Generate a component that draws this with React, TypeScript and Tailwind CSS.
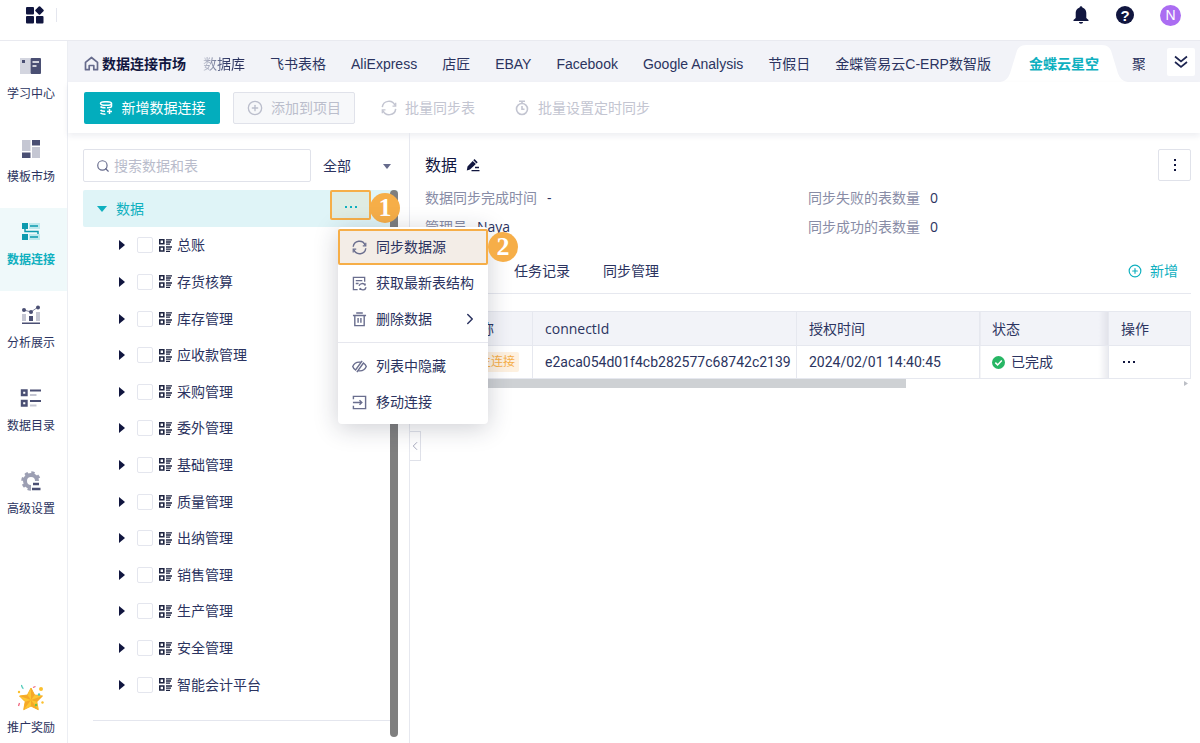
import type { ReactNode } from "react";
import { ChevronLeft, ChevronRight, CirclePlus, Search } from "lucide-react";

const railItems = [
  { label: "学习中心", icon: <LearnIcon /> },
  { label: "模板市场", icon: <TemplateIcon /> },
  { label: "数据连接", icon: <ConnectIcon />, active: true },
  { label: "分析展示", icon: <AnalysisIcon /> },
  { label: "数据目录", icon: <CatalogIcon /> },
  { label: "高级设置", icon: <SettingsIcon /> },
];

const tabs = ["飞书表格", "AliExpress", "店匠", "EBAY", "Facebook", "Google Analysis", "节假日", "金蝶管易云C-ERP数智版"];

const modules = [
  "总账",
  "存货核算",
  "库存管理",
  "应收款管理",
  "采购管理",
  "委外管理",
  "基础管理",
  "质量管理",
  "出纳管理",
  "销售管理",
  "生产管理",
  "安全管理",
  "智能会计平台",
];

function LearnIcon() {
  return (
    <svg width="22" height="20" viewBox="0 0 22 20">
      <path d="M0 2h10v16H0z" fill="#d3d5df" />
      <path d="M2 4h3v3H2z" fill="#4a4f73" />
      <rect x="10.500" y="2" width="10.500" height="16" rx="1" fill="#4a4f73" />
      <path d="M12.500 6h6.500M12.500 10h4" stroke="#fff" strokeWidth="1.300" />
    </svg>
  );
}

function TemplateIcon() {
  return (
    <svg width="20" height="20" viewBox="0 0 20 20">
      <path d="M1 1h8.500v11H1zM11 8h8v11h-8z" fill="#c5c7d3" />
      <path d="M11 1h8v5.500h-8zM1 13.500h8.500V19H1z" fill="#4a4f73" />
    </svg>
  );
}

function ConnectIcon() {
  return (
    <svg width="20" height="20" viewBox="0 0 20 20">
      <path d="M8 1h11v6H8zM8 12h11v6H8z" fill="#bfe9ed" />
      <path d="M1 1h6v6H1zM1 12h6v6H1z" fill="#0d9aae" />
      <path d="M9 4h8M9 15h8M4 7v2.500h13V12" fill="none" stroke="#0d9aae" strokeWidth="1.500" />
    </svg>
  );
}

function AnalysisIcon() {
  return (
    <svg width="20" height="20" viewBox="0 0 20 20">
      <path d="M1 9h4v7H1zM15 7h4v9h-4z" fill="#c5c7d3" />
      <path d="M8 11h4v5H8zM1 17.500h18V19H1z" fill="#4a4f73" />
      <path d="M3 5l7 2 7-5" fill="none" stroke="#8487a0" />
      <circle cx="3" cy="5" r="2" fill="#4a4f73" />
      <circle cx="10" cy="7" r="2" fill="#4a4f73" />
      <circle cx="17" cy="2.500" r="2" fill="#4a4f73" />
    </svg>
  );
}

function CatalogIcon() {
  return (
    <svg width="22" height="20" viewBox="0 0 22 20">
      <path d="M2 2.500h4.500V7H2zM2 13h4.500v4.500H2z" fill="none" stroke="#4a4f73" strokeWidth="2.400" />
      <path d="M10 2.500h11M10 13h11" stroke="#4a4f73" strokeWidth="2.200" />
      <path d="M10 7h6.500M10 17.500h6.500" stroke="#c5c7d3" strokeWidth="2.200" />
    </svg>
  );
}

function SettingsIcon() {
  return (
    <svg width="20" height="20" viewBox="0 0 20 20">
      <circle cx="10" cy="10" r="6" fill="none" stroke="#9c9fb3" strokeWidth="4" />
      <circle cx="10" cy="10" r="8.500" fill="none" stroke="#9c9fb3" strokeWidth="2.500" strokeDasharray="3.340" />
      <path d="M10 10h10v10H10z" fill="#fff" />
      <path d="M12 13h6M11 18h8.500" stroke="#4a4f73" strokeWidth="2.600" />
    </svg>
  );
}

function StarIcon() {
  return (
    <svg width="28" height="28" viewBox="0 0 28 28">
      <path d="M14 4l3.600 7 7.900 1-5.700 5.700 1.500 8-7.300-3.600-7.300 3.600 1.500-8L2.500 12l7.900-1z" fill="#fdc631" stroke="#f9b52a" strokeLinejoin="round" />
      <path d="M14 4v12l3.600-5zM25.500 12L14 16l5.800 1.700zM21.300 25.700L14 16v6.100zM6.700 25.700L14 16l-5.800 1.700zM2.500 12L14 16l-3.600-5z" fill="#f5a828" />
      <path d="M4 1.500c2 0 0 2.500 2.500 3" fill="none" stroke="#4cc9b8" strokeWidth="1.300" />
      <path d="M16 3.500l2.500-1M1.500 22l1-3" stroke="#f0647c" strokeWidth="1.300" />
      <circle cx="24" cy="5" r="2" fill="#fbc02d" />
      <circle cx="2" cy="8" r="1.200" fill="#fbc02d" />
      <circle cx="25.500" cy="18.500" r="1.200" fill="#fbc02d" />
      <circle cx="22" cy="10.500" r="1.200" fill="#4cc9b8" />
      <circle cx="19" cy="21" r="1.200" fill="#6cc04a" />
    </svg>
  );
}

function LogoIcon() {
  return (
    <svg width="18" height="18" viewBox="0 0 18 18" fill="#11163f">
      <rect y="1" width="8" height="7.500" rx="1" />
      <rect y="10" width="8" height="7.500" rx="1" />
      <rect x="10" y="10" width="7.500" height="7.500" rx="1" />
      <rect x="10.200" y="1.200" width="6.600" height="6.600" rx="1" transform="rotate(45 13.500 4.500)" />
    </svg>
  );
}

function HomeIcon() {
  return (
    <svg width="15" height="15" viewBox="0 0 15 15" fill="none" stroke="#666b8c" strokeWidth="1.700">
      <path d="M1.500 6.300L7.500 1.500l6 4.800v7.400H9.800V9.500H5.200v4.200H1.500z" strokeLinejoin="round" />
    </svg>
  );
}

function DoubleDownIcon() {
  return (
    <svg width="14" height="14" viewBox="0 0 14 14" fill="none" stroke="#1d2450" strokeWidth="1.700">
      <path d="M1 1.500l6 4.800 6-4.800M1 7l6 4.800L13 7" />
    </svg>
  );
}

function SyncIcon() {
  return (
    <svg width="16" height="16" viewBox="0 0 16 16" fill="none" stroke="currentColor" strokeWidth="1.500">
      <path d="M1.300 7.200A6.600 6.600 0 0 1 14 5.500M14.700 8.800A6.600 6.600 0 0 1 2 10.500" />
      <path d="M14.700 2.800v3.400h-3.200M1.300 13.200V9.800h3.200" strokeWidth="1.300" />
    </svg>
  );
}

function TimerIcon() {
  return (
    <svg width="14" height="16" viewBox="0 0 14 16" fill="none" stroke="currentColor" strokeWidth="1.600">
      <circle cx="7" cy="9" r="5.500" />
      <path d="M4 1.200h6M7 1v2.500M7 6v3.300h2.500" />
    </svg>
  );
}

function DatabaseAddIcon() {
  return (
    <svg width="14" height="14" viewBox="0 0 14 14" fill="none" stroke="currentColor" strokeWidth="1.500">
      <ellipse cx="7" cy="2.500" rx="5.500" ry="1.800" />
      <path d="M12.500 2.500v2.700c0 .8-2 1.500-4.500 1.500M1.500 5.500c.8 1 3 1.300 5 1.300M1.500 9c.8 1 2.500 1.300 4.500 1.300M1.500 12c.8.800 2.500 1.200 5 1.200M10.500 8v5M8 10.500h5" />
    </svg>
  );
}

function TableListIcon() {
  return (
    <svg width="13" height="13" viewBox="0 0 13 13" fill="none" stroke="#1d2340">
      <path d="M.8.8h4v4h-4zM.8 8h4v4h-4z" strokeWidth="1.600" />
      <path d="M7 .8h6M7 3h5M7 5.200h4M7 8h6M7 10.100h5M7 12.300h4" strokeWidth="1.300" />
    </svg>
  );
}

function StructureIcon() {
  return (
    <svg width="16" height="16" viewBox="0 0 16 16" fill="none" stroke="currentColor" strokeWidth="1.400">
      <path d="M6 14.500H1.500v-13h12V6M4 5h7M4 8h3" />
      <path d="M7.500 10.500a3.500 3.500 0 0 1 6.500-.5V8M15 12a3.500 3.500 0 0 1-6.500 1v2" />
    </svg>
  );
}

function TrashIcon() {
  return (
    <svg width="16" height="16" viewBox="0 0 16 16" fill="none" stroke="currentColor" strokeWidth="1.500">
      <path d="M4.500 1h7M1 3.700h14M3 3.700v10.800h10V3.700M6.500 6.500v5M9.500 6.500v5" />
    </svg>
  );
}

function HiddenIcon() {
  return (
    <svg width="16" height="16" viewBox="0 0 16 16" fill="none" stroke="currentColor" strokeWidth="1.500">
      <path d="M9.500 3.500C5 2.800 2 5 .8 8c.5 1.500 1.500 2.700 3 3.700L10.800 2M6.500 12.500c4.500.7 7.500-1.500 8.700-4.500-.5-1.500-1.500-2.700-3-3.700L5.200 14" />
    </svg>
  );
}

function MoveIcon() {
  return (
    <svg width="16" height="16" viewBox="0 0 16 16" fill="none" stroke="currentColor" strokeWidth="1.500">
      <path d="M1.500 4.500v-3h13v13h-13v-3M1 8h9.500M8 5.500L10.500 8 8 10.500" />
    </svg>
  );
}

function EditIcon() {
  return (
    <svg width="14" height="14" viewBox="0 0 14 14" fill="#11163f">
      <path d="M8.500 1l3.200 3.200-1.200 1.200-3.200-3.200zM6.700 2.900l3.200 3.200L4 11.500.8 12.500l.7-4z" />
      <path d="M9 9.500h4M5.500 12.600h8" stroke="#11163f" strokeWidth="1.300" />
    </svg>
  );
}

function Marker({ children }: { children: ReactNode }) {
  return (
    <span className="flex h-[30px] w-[30px] items-center justify-center rounded-full bg-[#f6ae48] font-['Liberation_Serif',serif] text-[26px] leading-none font-bold text-white">
      {children}
    </span>
  );
}

function TopBar() {
  return (
    <header className="flex h-[41px] shrink-0 items-start justify-between border-b border-[#e9eaf0] pr-[19px] pl-[26px]">
      <div className="flex h-[30px] items-center gap-3">
        <button aria-label="应用">
          <LogoIcon />
        </button>
        <span className="h-[14px] w-px bg-[#e4e6ee]" />
      </div>
      <div className="flex h-[30px] items-center gap-[26px]">
        <button aria-label="通知">
          <svg width="18" height="18" viewBox="0 0 18 18" fill="#11163f">
            <circle cx="9" cy="1.500" r="1.300" />
            <path d="M9 1.500c-3.500 0-5.300 2.500-5.300 5.500v5L1.500 14v1h15v-1l-2.200-2V7c0-3-1.800-5.500-5.300-5.500zM7 16h4c0 1-.8 1.700-2 1.700S7 17 7 16z" />
          </svg>
        </button>
        <button aria-label="帮助" className="flex h-[18px] w-[18px] items-center justify-center rounded-full bg-[#11163f] font-['Liberation_Sans',sans-serif] text-[15px] leading-none font-bold text-white">
          ?
        </button>
        <button className="flex h-[21px] w-[21px] items-center justify-center rounded-full bg-[#ab6df2] font-['Liberation_Sans',sans-serif] text-sm leading-none text-white">
          N
        </button>
      </div>
    </header>
  );
}

function Rail() {
  return (
    <nav className="flex w-[68px] shrink-0 flex-col border-r border-[#eceef3] pt-px text-xs">
      {railItems.map((item) => (
        <a
          key={item.label}
          href="#"
          className={
            item.active
              ? "flex h-[83px] flex-col items-center bg-[#eff9fa] pt-[14px] pr-[5px] font-bold text-[#0fb0bf]"
              : "flex h-[83px] flex-col items-center pt-[14px] pr-[5px]"
          }
        >
          {item.icon}
          <span className="mt-[9px] leading-[18px]">{item.label}</span>
        </a>
      ))}
      <a href="#" className="mt-auto flex flex-col items-center pr-[5px] pb-[6px]">
        <StarIcon />
        <span className="mt-[7px] leading-[18px]">推广奖励</span>
      </a>
    </nav>
  );
}

function SourceTabs() {
  return (
    <div className="flex h-[41px] items-center bg-[#f2f3f8] pr-[5px] pl-4 font-['Liberation_Sans','Noto_Sans_CJK_SC',sans-serif] whitespace-nowrap">
      <a href="#" className="mt-1 flex items-center gap-[3px] font-bold text-[#11163f]">
        <HomeIcon />
        数据连接市场
      </a>
      <div className="mt-1 flex min-w-0 flex-1 items-center gap-[25px] overflow-hidden pl-[17px]">
        <a href="#" className="bg-linear-to-r from-[#c9cbd6] to-[#2b3360] to-60% bg-clip-text text-transparent">
          数据库
        </a>
        {tabs.map((tab) => (
          <a key={tab} href="#">
            {tab}
          </a>
        ))}
      </div>
      <a href="#" className="relative flex h-[37px] w-[128px] shrink-0 items-center justify-center self-end font-bold text-[#0fb0bf]">
        <svg className="absolute inset-0 h-full w-full" viewBox="0 0 126 37" preserveAspectRatio="none">
          <path d="M0 37c6-1 8-4 10-9l6-20c1-5 4-8 10-8h74c6 0 9 3 10 8l6 20c2 5 4 8 10 9z" fill="#fff" />
        </svg>
        <span className="relative">金蝶云星空</span>
      </a>
      <a href="#" className="mt-1 ml-1 w-[13px] shrink-0 overflow-hidden">
        聚
      </a>
      <button aria-label="更多" className="ml-[22px] flex h-7 w-7 shrink-0 items-center justify-center rounded-xs bg-white">
        <DoubleDownIcon />
      </button>
    </div>
  );
}

function Toolbar() {
  return (
    <div className="relative z-10 flex h-[51px] items-center bg-white pl-4 shadow-[0_3px_6px_rgba(30,40,90,0.08)]">
      <button className="flex h-8 w-[136px] items-center justify-center gap-[9px] rounded-xs bg-[#03adbd] text-white">
        <DatabaseAddIcon />
        新增数据连接
      </button>
      <button disabled className="ml-[13px] flex h-8 w-[122px] items-center justify-center gap-2 rounded-xs border border-[#e0e2ea] bg-[#f7f8fa] text-[#bbbecc]">
        <CirclePlus className="h-4 w-4" strokeWidth={2} />
        添加到项目
      </button>
      <button disabled className="ml-[26px] flex items-center gap-2 text-[#c3c5d1]">
        <SyncIcon />
        批量同步表
      </button>
      <button disabled className="ml-10 flex items-center gap-[9px] text-[#c3c5d1]">
        <TimerIcon />
        批量设置定时同步
      </button>
    </div>
  );
}

function MenuItem({ icon, label, arrow, active }: { icon: ReactNode; label: string; arrow?: boolean; active?: boolean }) {
  return (
    <button
      className={
        active
          ? "relative flex h-9 w-full items-center gap-[9px] rounded-xs bg-[#f3ede7] pr-[13px] pl-[14px] ring-2 ring-[#f6ae48] ring-inset"
          : "relative flex h-9 w-full items-center gap-[9px] pr-[13px] pl-[14px]"
      }
    >
      <span className="text-[#6a6e8e] [&>svg]:h-[15px] [&>svg]:w-[15px]">{icon}</span>
      {label}
      {arrow && <ChevronRight className="-mr-1 ml-auto h-[18px] w-[18px]" />}
      {active && (
        <span className="absolute top-[3px] left-full">
          <Marker>2</Marker>
        </span>
      )}
    </button>
  );
}

function ContextMenu() {
  return (
    <div className="absolute top-full right-[-90px] z-20 w-[150px] rounded-sm bg-white pt-[2px] pb-1 shadow-[0_4px_24px_rgba(30,35,60,0.22)]">
      <MenuItem icon={<SyncIcon />} label="同步数据源" active />
      <MenuItem icon={<StructureIcon />} label="获取最新表结构" />
      <MenuItem icon={<TrashIcon />} label="删除数据" arrow />
      <hr className="my-[5px] border-[#e6e7ee]" />
      <MenuItem icon={<HiddenIcon />} label="列表中隐藏" />
      <MenuItem icon={<MoveIcon />} label="移动连接" />
    </div>
  );
}

function SourceTree() {
  return (
    <aside className="relative z-10 flex w-[342px] shrink-0 flex-col border-r border-[#e6e8ef] pt-4 pr-[11px] pl-[15px]">
      <div className="flex items-center">
        <label className="flex h-[33px] w-[228px] items-center gap-1 rounded-xs border border-[#e0e2ea] pl-3">
          <Search className="h-[14px] w-[14px] shrink-0 text-[#666b8c]" />
          <input aria-label="搜索数据和表" placeholder="搜索数据和表" className="w-full min-w-0 outline-none placeholder:text-[#b9bccb]" />
        </label>
        <div className="relative ml-3 flex-1">
          <select aria-label="范围" className="w-full appearance-none bg-transparent outline-none">
            <option>全部</option>
          </select>
          <svg className="pointer-events-none absolute top-2 right-[7px]" width="8" height="5" viewBox="0 0 8 5">
            <path d="M0 0h8L4 5z" fill="#666b8c" />
          </svg>
        </div>
      </div>

      <div className="relative mt-2 flex flex-1 flex-col">
        <div className="relative flex h-[37px] shrink-0 items-center rounded-xs bg-[#dff4f7] pl-[14px] text-[#0fb0bf]">
          <button aria-label="收起" className="mr-[9px]">
            <svg width="10" height="6" viewBox="0 0 10 6">
              <path d="M0 0h10L5 6z" fill="#0fb0bf" />
            </svg>
          </button>
          数据
          <button
            aria-label="操作"
            className="mr-[27px] ml-auto flex h-[30px] w-[41px] items-center justify-center gap-[3px] self-start rounded-xs border-2 border-[#f6ae48] bg-[#dfece3]"
          >
            <span className="mt-1 h-[2px] w-[2px] bg-[#0fb0bf]" />
            <span className="mt-1 h-[2px] w-[2px] bg-[#0fb0bf]" />
            <span className="mt-1 h-[2px] w-[2px] bg-[#0fb0bf]" />
          </button>
          <span className="absolute top-[3px] right-[-2px] z-10">
            <Marker>1</Marker>
          </span>
          <div className="text-[#2b3360]">
            <ContextMenu />
          </div>
        </div>
        <ul className="flex flex-1 flex-col">
          {modules.map((name) => (
            <li key={name} className="flex flex-1 items-center pl-9">
              <button aria-label={"展开" + name} className="mr-3">
                <svg width="6" height="10" viewBox="0 0 6 10">
                  <path d="M0 0l6 5-6 5z" fill="#11163f" />
                </svg>
              </button>
              <label className="flex items-center">
                <input type="checkbox" className="mr-[6px] h-4 w-4 appearance-none rounded-xs border border-[#e4e6ee] bg-white" />
                <TableListIcon />
                <span className="ml-[5px]">{name}</span>
              </label>
            </li>
          ))}
        </ul>
        <div className="mt-[17px] mr-1 ml-[10px] h-[23px] border-t border-[#e4e6ee]" />
        <div className="absolute top-0 right-0 bottom-[6px] w-2 rounded-full bg-[#7f7f7f]" />
      </div>
    </aside>
  );
}

function Field({ label, value }: { label: string; value: string }) {
  return (
    <div className="flex h-[29px] items-center gap-[10px]">
      <dt className="text-[#888ca6]">{label}</dt>
      <dd>{value}</dd>
    </div>
  );
}

function Detail() {
  return (
    <main className="relative min-w-0 flex-1 pt-4 pr-[9px] pl-[15px]">
      <div className="flex h-8 items-center gap-[9px]">
        <h1 className="text-base font-normal text-[#11163f]">数据</h1>
        <button aria-label="编辑">
          <EditIcon />
        </button>
        <button aria-label="更多操作" className="ml-auto flex h-8 w-[33px] flex-col items-center justify-center gap-[3px] rounded-xs border border-[#e0e2ea]">
          <span className="h-[2px] w-[2px] bg-[#11163f]" />
          <span className="h-[2px] w-[2px] bg-[#11163f]" />
          <span className="h-[2px] w-[2px] bg-[#11163f]" />
        </button>
      </div>
      <dl className="mt-[2px] grid grid-cols-2">
        <Field label="数据同步完成时间" value="-" />
        <Field label="同步失败的表数量" value="0" />
        <Field label="管理员" value="Naya" />
        <Field label="同步成功的表数量" value="0" />
      </dl>
      <div className="mt-2 flex h-[45px] items-center gap-[33px] border-b border-[#e6e8ef]">
        <button>连接管理</button>
        <button>任务记录</button>
        <button>同步管理</button>
        <button className="ml-auto flex items-center gap-2 pr-[13px] text-[#0fb0bf]">
          <CirclePlus className="h-[14px] w-[14px]" />
          新增
        </button>
      </div>

      <table className="mt-[17px] w-full table-fixed border-collapse text-left [&_td]:border [&_td]:border-[#e6e8ef] [&_td]:px-3 [&_th]:border [&_th]:border-[#e6e8ef] [&_th]:px-3 [&_th]:font-normal">
        <thead>
          <tr className="h-[34px] bg-[#f2f3f8]">
            <th className="w-[107px]">连接名称</th>
            <th>connectId</th>
            <th className="w-[183px]">授权时间</th>
            <th className="w-[129px] bg-linear-to-l from-[#e2e3ea] to-transparent to-8%">状态</th>
            <th className="w-[82px]">操作</th>
          </tr>
        </thead>
        <tbody>
          <tr className="h-[33px] font-[Roboto,'Noto_Sans_CJK_SC',sans-serif]">
            <td>
              <div className="flex items-center gap-[9px] whitespace-nowrap">
                数据
                <span className="rounded-xs bg-[#fef1e0] px-1 text-xs leading-5 text-[#f6ae48]">主连接</span>
              </div>
            </td>
            <td className="whitespace-nowrap">e2aca054d01f4cb282577c68742c2139</td>
            <td>2024/02/01 14:40:45</td>
            <td className="bg-linear-to-l from-[#e9eaef] to-transparent to-8%">
              <div className="flex items-center gap-[6px]">
                <svg width="13" height="13" viewBox="0 0 13 13">
                  <circle cx="6.500" cy="6.500" r="6.500" fill="#27b664" />
                  <path d="M3.300 6.600l2.300 2.300 4.200-4.300" fill="none" stroke="#fff" strokeWidth="1.500" />
                </svg>
                已完成
              </div>
            </td>
            <td>
              <button aria-label="行操作" className="flex gap-[3px] px-[2px] py-2">
                <span className="h-[2px] w-[2px] bg-[#11163f]" />
                <span className="h-[2px] w-[2px] bg-[#11163f]" />
                <span className="h-[2px] w-[2px] bg-[#11163f]" />
              </button>
            </td>
          </tr>
        </tbody>
      </table>
      <div className="flex items-center justify-between pr-[3px]">
        <div className="h-[9px] w-[63%] bg-[#ced1d4]" />
        <svg width="4" height="5" viewBox="0 0 4 5">
          <path d="M0 0l4 2.500L0 5z" fill="#bcbfc6" />
        </svg>
      </div>

      <button aria-label="收起面板" className="absolute top-[298px] -left-px flex h-[30px] w-3 items-center justify-center border border-[#dfe1e9] bg-white text-[#9c9fb3]">
        <ChevronLeft className="h-[14px] w-[14px] shrink-0" strokeWidth={1.5} />
      </button>
    </main>
  );
}

export default function App() {
  return (
    <div className="flex h-screen flex-col overflow-hidden bg-white font-['Open_Sans','Noto_Sans_CJK_SC',sans-serif] text-sm text-[#2b3360]">
      <TopBar />
      <div className="flex min-h-0 flex-1">
        <Rail />
        <div className="flex min-w-0 flex-1 flex-col">
          <SourceTabs />
          <Toolbar />
          <div className="flex min-h-0 flex-1">
            <SourceTree />
            <Detail />
          </div>
        </div>
      </div>
    </div>
  );
}
